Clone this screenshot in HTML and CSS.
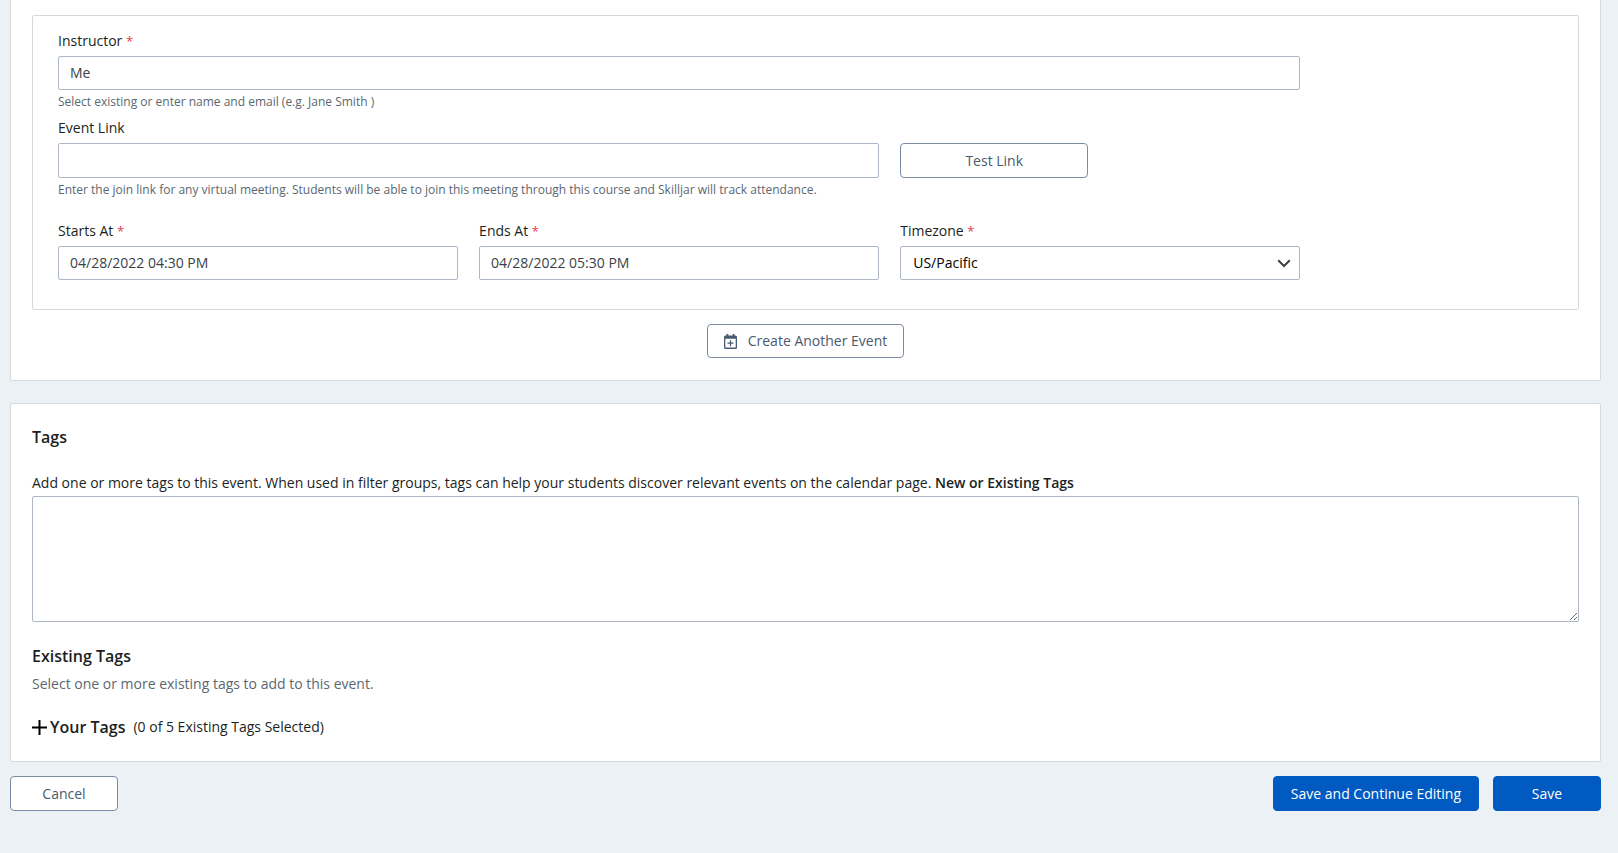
FILE: index.html
```
<!DOCTYPE html>
<html lang="en">
<head>
  <meta charset="utf-8">
  <title>Edit Event</title>
  <link rel="stylesheet" href="styles.css">
</head>
<body>
  <form class="page">
    <section class="card card-events">
      <div class="event">
        <div class="event-fields">
          <div class="field field-full">
            <label class="label" for="instructor">Instructor <span class="required">*</span></label>
            <input class="control" id="instructor" type="text" value="Me">
            <p class="help">Select existing or enter name and email (e.g. Jane Smith )</p>
          </div>
          <div class="field field-link">
            <label class="label" for="link">Event Link</label>
            <div class="link-row">
              <input class="control control-tall" id="link" type="text">
              <button class="button button-test" type="button">Test Link</button>
            </div>
            <p class="help">Enter the join link for any virtual meeting. Students will be able to join this meeting through this course and Skilljar will track attendance.</p>
          </div>
          <div class="field">
            <label class="label" for="starts">Starts At <span class="required">*</span></label>
            <input class="control" id="starts" type="text" value="04/28/2022 04:30 PM">
          </div>
          <div class="field">
            <label class="label" for="ends">Ends At <span class="required">*</span></label>
            <input class="control" id="ends" type="text" value="04/28/2022 05:30 PM">
          </div>
          <div class="field">
            <label class="label" for="timezone">Timezone <span class="required">*</span></label>
            <div class="select">
              <select class="control control-select" id="timezone">
                <option>US/Pacific</option>
              </select>
              <svg class="select-arrow" width="14" height="9" viewBox="0 0 14 9" aria-hidden="true"><path d="M1.2 1.2 7 7l5.800-5.800" fill="none" stroke="currentColor" stroke-width="2"/></svg>
            </div>
          </div>
        </div>
      </div>
      <button class="button button-create" type="button">
        <svg width="13" height="15" viewBox="0 0 13 15" aria-hidden="true">
          <path d="M2.500 0h1.800v1.500h4.400V0h1.800v1.500h1A1.500 1.500 0 0 1 13 3v10.500a1.500 1.500 0 0 1-1.500 1.500h-10A1.500 1.500 0 0 1 0 13.500V3a1.500 1.500 0 0 1 1.500-1.500h1zM1.300 4.800v8.800h10.400V4.800z" fill="currentColor" fill-rule="evenodd"/>
          <path d="M6.500 6.200v6M3.500 9.200h6" fill="none" stroke="currentColor" stroke-width="1.300"/>
        </svg>
        Create Another Event
      </button>
    </section>

    <section class="card">
      <h2 class="heading">Tags</h2>
      <p class="intro">Add one or more tags to this event. When used in filter groups, tags can help your students discover relevant events on the calendar page. <label class="strong" for="tags">New or Existing Tags</label></p>
      <textarea class="control control-area" id="tags"></textarea>
      <h2 class="heading">Existing Tags</h2>
      <p class="muted">Select one or more existing tags to add to this event.</p>
      <div class="your-tags">
        <button class="toggle" type="button" aria-expanded="false">
          <svg width="15" height="15" viewBox="0 0 15 15" aria-hidden="true"><path d="M7.500 0v15M0 7.500h15" stroke="#000" stroke-width="2"/></svg>
          Your Tags
        </button>
        <span>(0 of 5 Existing Tags Selected)</span>
      </div>
    </section>

    <footer class="actions">
      <button class="button button-wide" type="button">Cancel</button>
      <div class="actions-save">
        <button class="button button-primary" type="submit">Save and Continue Editing</button>
        <button class="button button-primary button-wide" type="submit">Save</button>
      </div>
    </footer>
  </form>
</body>
</html>
```
FILE: styles.css
```
* {
  box-sizing: border-box;
}

body {
  margin: 0;
  background: #ebf1f4;
  color: #1b1f23;
  font: 14px/20px "Open Sans", "Noto Sans", sans-serif;
}

h2,
p {
  margin: 0;
}

.page {
  padding: 0 17px 42px 10px;
}

.card {
  padding: 21px;
  background: #fff;
  border: 1px solid #d6d9da;
  border-radius: 2px;
  margin-bottom: 22px;
}

.card-events {
  display: flex;
  flex-direction: column;
  align-items: center;
  gap: 14px;
  padding-top: 15px;
  padding-bottom: 22px;
  border-top: 0;
  border-radius: 0 0 2px 2px;
}

.card + .card {
  margin-bottom: 14px;
}

.event {
  align-self: stretch;
  display: grid;
  grid-template-columns: repeat(12, 1fr);
  column-gap: 21px;
  padding: 15px 25px 29px;
  border: 1px solid #d6d9da;
  border-radius: 2px;
}

.event-fields {
  grid-column: span 10;
  display: grid;
  grid-template-columns: repeat(3, 1fr);
  column-gap: 21px;
}

.field-full,
.field-link {
  grid-column: 1 / -1;
}

.field-full {
  margin-bottom: 8px;
}

.field-link {
  margin-bottom: 23px;
}

.label {
  display: block;
  margin-bottom: 5px;
}

.required {
  color: #e8384f;
  font-size: 13px;
  line-height: 1;
}

.control {
  display: block;
  width: 100%;
  height: 34px;
  padding: 0 11px 1px;
  background: #fff;
  border: 1px solid #adb7c6;
  border-radius: 2px;
  color: #3b4148;
  font: inherit;
}

.control-tall {
  grid-column: span 2;
  height: 35px;
}

.control-select {
  appearance: none;
  padding: 0 32px 1px 12px;
  color: #000;
}

.control-area {
  height: 126px;
  margin: 3px 0 22px;
  padding: 8px 11px;
}

.select {
  position: relative;
}

.select-arrow {
  position: absolute;
  top: 13px;
  right: 9px;
  color: #3b4148;
  pointer-events: none;
}

.link-row {
  display: grid;
  grid-template-columns: repeat(3, 1fr);
  column-gap: 21px;
}

.help {
  margin-top: 4px;
  color: #5b6770;
  font-size: 12px;
  line-height: 16px;
}

.button {
  display: inline-flex;
  align-items: center;
  justify-content: center;
  height: 35px;
  padding: 0 16px;
  background: #fff;
  border: 1px solid #7b8ba3;
  border-radius: 4px;
  color: #4a5a6e;
  font: inherit;
}

.button-test {
  width: 47%;
}

.button-create {
  gap: 11px;
  height: 34px;
}

.button-wide {
  min-width: 108px;
}

.button-primary {
  padding: 0 17px;
  background: #005ac1;
  border-color: #005ac1;
  color: #fff;
}

.heading {
  font-size: 16px;
  font-weight: 600;
  line-height: 24px;
}

.intro {
  margin-top: 24px;
}

.strong {
  font-weight: 600;
}

.muted {
  margin-top: 6px;
  color: #5b6770;
}

.your-tags {
  display: flex;
  align-items: center;
  gap: 8px;
  margin-top: 21px;
  margin-bottom: 1px;
}

.toggle {
  display: flex;
  align-items: center;
  gap: 3px;
  padding: 0;
  background: none;
  border: 0;
  color: inherit;
  font: inherit;
  font-size: 16px;
  font-weight: 600;
  line-height: 24px;
}

.actions {
  display: flex;
  justify-content: space-between;
}

.actions-save {
  display: flex;
  gap: 14px;
}
```
